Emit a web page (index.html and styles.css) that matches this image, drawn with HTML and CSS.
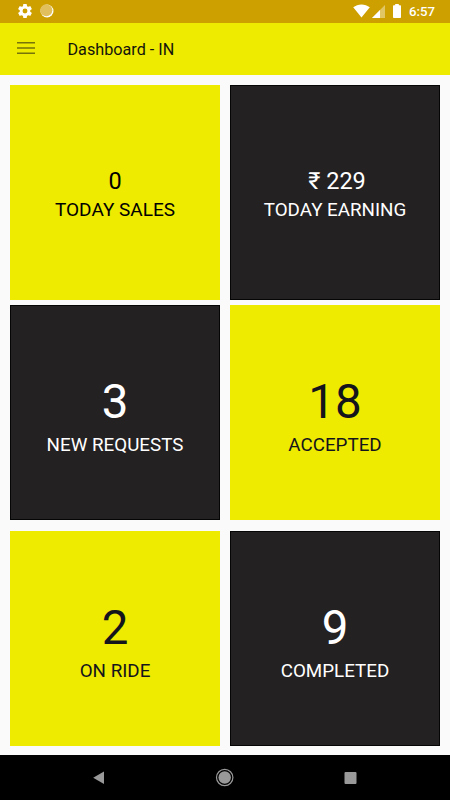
FILE: index.html
```html
<!DOCTYPE html>
<html lang="en">
<head>
    <meta charset="UTF-8">
    <meta name="viewport" content="width=device-width, initial-scale=1.0">
    <title>Dashboard - IN</title>
    <link rel="stylesheet" href="styles.css">
</head>
<body>
    <div class="status-bar">
        <svg class="gear" width="14" height="14" viewBox="2 2 20 20">
            <path fill="#fff" d="M19.430 13c.040-.320.070-.650.070-1s-.030-.680-.070-1l2.110-1.630c.190-.150.240-.420.120-.640l-2-3.460c-.120-.220-.380-.310-.610-.220l-2.490 1c-.520-.390-1.080-.730-1.690-.980l-.380-2.650A.490.490 0 0 0 14 2h-4c-.250 0-.460.180-.490.420l-.380 2.650c-.610.250-1.170.590-1.690.980l-2.490-1c-.230-.090-.490 0-.610.220l-2 3.460c-.130.220-.070.490.120.640L4.570 11c-.040.320-.070.650-.070 1s.030.660.070 1l-2.110 1.630c-.190.150-.240.420-.120.640l2 3.460c.120.220.390.300.610.220l2.490-1c.520.400 1.080.730 1.690.980l.380 2.650c.030.240.240.420.490.420h4c.250 0 .460-.180.490-.420l.380-2.650c.610-.250 1.170-.590 1.690-.980l2.490 1c.230.090.490 0 .610-.220l2-3.460c.120-.220.070-.490-.120-.640zM12 15.500a3.500 3.500 0 1 1 0-7 3.500 3.500 0 0 1 0 7z"/>
        </svg>
        <svg class="sync" width="14" height="14" viewBox="0 0 14 14">
            <circle cx="7" cy="7" r="6.500" fill="#fff"/>
            <circle cx="6.300" cy="6.300" r="6" fill="#e0bf5c"/>
        </svg>
        <svg class="wifi" width="17" height="14" viewBox="0 0 17 14">
            <path fill="#fff" d="M8.500 13.600 0.200 3.300C2.600 1.400 5.400.400 8.500.400s5.900 1 8.300 2.900z"/>
        </svg>
        <svg class="signal" width="13" height="13" viewBox="0 0 13 13">
            <path fill="#fff" fill-opacity=".4" d="M13 0v13H0z"/>
            <path fill="#fff" d="M8 5v8H0z"/>
        </svg>
        <svg class="battery" width="8" height="14" viewBox="0 0 8 14">
            <path fill="#fff" d="M2.200 0h3.600v1.300h1.400q.8 0 .8.800v11.100q0 .8-.8.800H.8q-.8 0-.8-.8V2.100q0-.8.8-.8h1.400z"/>
        </svg>
        <span class="time">6:57</span>
    </div>

    <header class="app-bar">
        <svg class="menu" width="18" height="14" viewBox="0 0 18 14">
            <path stroke="#777409" stroke-width="1.600" d="M0 1.800h18M0 7h18M0 12.200h18"/>
        </svg>
        <h1>Dashboard - IN</h1>
    </header>

    <main class="dashboard">
        <div class="card yellow small">
            <div class="count">0</div>
            <div class="label">TODAY SALES</div>
        </div>
        <div class="card dark small">
            <div class="count amount">₹ 229</div>
            <div class="label">TODAY EARNING</div>
        </div>
        <div class="card dark">
            <div class="count">3</div>
            <div class="label">NEW REQUESTS</div>
        </div>
        <div class="card yellow">
            <div class="count">18</div>
            <div class="label">ACCEPTED</div>
        </div>
        <div class="card yellow last">
            <div class="count">2</div>
            <div class="label">ON RIDE</div>
        </div>
        <div class="card dark last">
            <div class="count">9</div>
            <div class="label">COMPLETED</div>
        </div>
    </main>

    <nav class="nav-bar">
        <svg width="18" height="18" viewBox="0 0 18 18">
            <path fill="#999" d="M14 2.500v12.500L3.200 8.800z"/>
        </svg>
        <svg width="18" height="18" viewBox="0 0 18 18">
            <circle cx="8.700" cy="8.500" r="8.200" fill="none" stroke="#999" stroke-width="1.200"/>
            <circle cx="8.700" cy="8.500" r="6.200" fill="#999"/>
        </svg>
        <svg width="18" height="18" viewBox="0 0 18 18">
            <rect x="3.500" y="3" width="12" height="12" rx="1" fill="#999"/>
        </svg>
    </nav>
</body>
</html>
```

FILE: styles.css
```css
* {
    box-sizing: border-box;
}

body {
    display: flex;
    flex-direction: column;
    height: 800px;
    margin: 0;
    overflow: hidden;
    background-color: #fafafa;
    font-family: Roboto, sans-serif;
}

svg {
    display: block;
    flex: none;
    overflow: visible;
}

.status-bar {
    display: flex;
    align-items: center;
    height: 22.5px;
    padding: 0 15px 0 17.5px;
    background-color: #cda000;
    color: #fff;
}

.sync {
    margin-left: 8.5px;
}

.wifi {
    margin-left: auto;
}

.signal {
    margin-left: 2px;
    margin-top: 1px;
}

.battery {
    margin-left: 8px;
    margin-right: 8px;
}

.time {
    font-size: 13.2px;
    font-weight: 500;
    line-height: 22px;
    padding-top: 1px;
}

.app-bar {
    display: flex;
    align-items: center;
    height: 52.5px;
    padding-left: 17.3px;
    background-color: #eeea00;
}

.menu {
    margin-bottom: 1px;
}

.app-bar h1 {
    margin: 2px 0 0 32.2px;
    font-size: 16.2px;
    font-weight: 400;
    line-height: 20px;
    color: #14140c;
}

.dashboard {
    display: grid;
    grid-template-columns: 210px 210px;
    grid-template-rows: 215px 215px 215px;
    column-gap: 10px;
    row-gap: 5.5px;
    height: 680px;
    padding: 9.5px 10px 0;
}

.card {
    display: flex;
    flex-direction: column;
    align-items: center;
    justify-content: center;
    padding-top: 5px;
    text-align: center;
}

.card.last {
    margin-top: 5px;
    margin-bottom: -5px;
}

.yellow {
    background-color: #eeea00;
    color: #14141c;
}

.dark {
    background-color: #242122;
    border: 1px solid #050505;
    color: #fff;
}

.count {
    font-size: 47.5px;
    line-height: 56px;
}

.label {
    font-size: 18.8px;
    line-height: 22px;
    margin-top: 4px;
}

.small {
    padding-top: 4px;
}

.small .count {
    font-size: 23.5px;
    line-height: 28px;
}

.small .amount {
    padding-left: 4px;
}

.small.yellow {
    color: #000;
}

.small.yellow .label {
    font-size: 19px;
}

.nav-bar {
    display: flex;
    align-items: center;
    justify-content: space-between;
    height: 45px;
    padding: 0 91px 0 90px;
    background-color: #000;
}
```
